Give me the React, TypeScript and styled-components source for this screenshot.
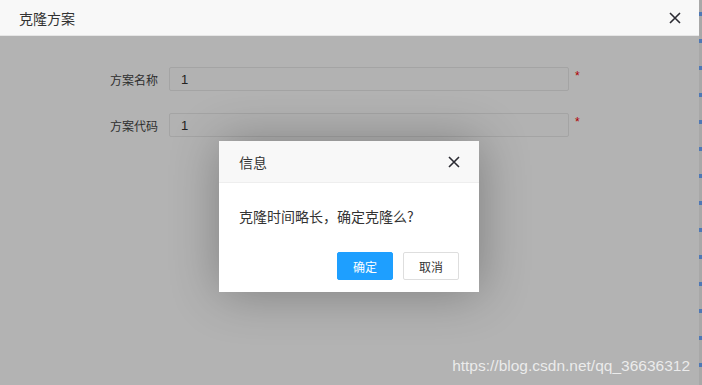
import styled, { createGlobalStyle } from "styled-components";

const GlobalStyle = createGlobalStyle`
  html, body {
    margin: 0;
    padding: 0;
    width: 702px;
    height: 385px;
    overflow: hidden;
    font-family: "Microsoft YaHei", "Noto Sans CJK SC", "Liberation Sans", sans-serif;
    color: #333;
  }
`;

const Page = styled.div`
  display: flex;
  width: 702px;
  height: 385px;
`;

const Panel = styled.div`
  position: relative;
  flex: 1;
  display: flex;
  flex-direction: column;
  background: #b3b3b3;
`;

const PageEdge = styled.div`
  width: 3px;
  background: repeating-linear-gradient(
    to bottom,
    #a8a8a8 0px,
    #a8a8a8 12px,
    #4f78b5 12px,
    #4f78b5 16px,
    #a8a8a8 16px,
    #a8a8a8 27px
  );
`;

const PanelHeader = styled.div`
  height: 36px;
  box-sizing: border-box;
  display: flex;
  align-items: center;
  justify-content: space-between;
  padding: 0 18px 0 19px;
  background: #f8f8f8;
  border-bottom: 1px solid #e6e6e6;
  font-size: 14px;
  color: #333;
`;

const CloseIcon = ({ size = 12 }: { size?: number }) => (
  <svg width={size} height={size} viewBox="0 0 12 12">
    <path d="M1 1L11 11M11 1L1 11" stroke="#2b2b33" strokeWidth="1.6" />
  </svg>
);

const PanelBody = styled.div`
  flex: 1;
  padding: 31px 0 0 100px;
  display: flex;
  flex-direction: column;
  gap: 22px;
`;

const FormRow = styled.div`
  display: flex;
  align-items: center;
`;

const Label = styled.div`
  width: 69px;
  padding-right: 11px;
  box-sizing: border-box;
  text-align: right;
  font-size: 12px;
  color: #2e2e2e;
`;

const InputBox = styled.div`
  width: 400px;
  height: 24px;
  box-sizing: border-box;
  border: 1px solid #a4a4a4;
  border-radius: 2px;
  background: #b2b2b2;
  padding-left: 11px;
  display: flex;
  align-items: center;
  font-size: 13px;
  font-family: "Liberation Sans", sans-serif;
  color: #222;
`;

const Required = styled.span`
  align-self: flex-start;
  margin: 2px 0 0 6px;
  color: #b00000;
  font-size: 12px;
  font-family: "Liberation Sans", sans-serif;
`;

const Shadow = styled.div`
  position: absolute;
  left: 219px;
  top: 141px;
  width: 260px;
  height: 151px;
  box-shadow: 1px 1px 50px rgba(0, 0, 0, 0.3);
  pointer-events: none;
`;

const Dialog = styled.div`
  position: absolute;
  left: 219px;
  top: 141px;
  width: 260px;
  background: #fff;
  display: flex;
  flex-direction: column;
`;

const DialogTitle = styled.div`
  height: 42px;
  box-sizing: border-box;
  display: flex;
  align-items: center;
  justify-content: space-between;
  padding: 0 19px 0 20px;
  background: #f8f8f8;
  border-bottom: 1px solid #eee;
  font-size: 14px;
  color: #333;
`;

const DialogContent = styled.div`
  padding: 21px 20px 19px 20px;
  line-height: 24px;
  font-size: 14px;
  color: #333;
`;

const DialogButtons = styled.div`
  display: flex;
  justify-content: flex-end;
  gap: 10px;
  padding: 5px 20px 12px;
`;

const DialogButton = styled.div<{ $primary?: boolean }>`
  width: 56px;
  height: 28px;
  box-sizing: border-box;
  display: flex;
  align-items: center;
  justify-content: center;
  border-radius: 2px;
  font-size: 12px;
  border: 1px solid ${(p) => (p.$primary ? "#1e9fff" : "#dedede")};
  background: ${(p) => (p.$primary ? "#1e9fff" : "#fff")};
  color: ${(p) => (p.$primary ? "#fff" : "#333")};
`;

const Watermark = styled.div`
  position: absolute;
  right: 9px;
  bottom: 10px;
  font-size: 15.5px;
  font-family: "Liberation Sans", sans-serif;
  color: rgba(255, 255, 255, 0.75);
`;

const fields = [
  { label: "方案名称", value: "1" },
  { label: "方案代码", value: "1" },
];

export default function App() {
  return (
    <Page>
      <GlobalStyle />
      <Panel>
        <PanelHeader>
          <span>克隆方案</span>
          <CloseIcon />
        </PanelHeader>
        <PanelBody>
          {fields.map((f) => (
            <FormRow key={f.label}>
              <Label>{f.label}</Label>
              <InputBox>{f.value}</InputBox>
              <Required>*</Required>
            </FormRow>
          ))}
        </PanelBody>
        <Shadow />
        <Dialog>
          <DialogTitle>
            <span>信息</span>
            <CloseIcon />
          </DialogTitle>
          <DialogContent>克隆时间略长，确定克隆么?</DialogContent>
          <DialogButtons>
            <DialogButton $primary>确定</DialogButton>
            <DialogButton>取消</DialogButton>
          </DialogButtons>
        </Dialog>
        <Watermark>https://blog.csdn.net/qq_36636312</Watermark>
      </Panel>
      <PageEdge />
    </Page>
  );
}
